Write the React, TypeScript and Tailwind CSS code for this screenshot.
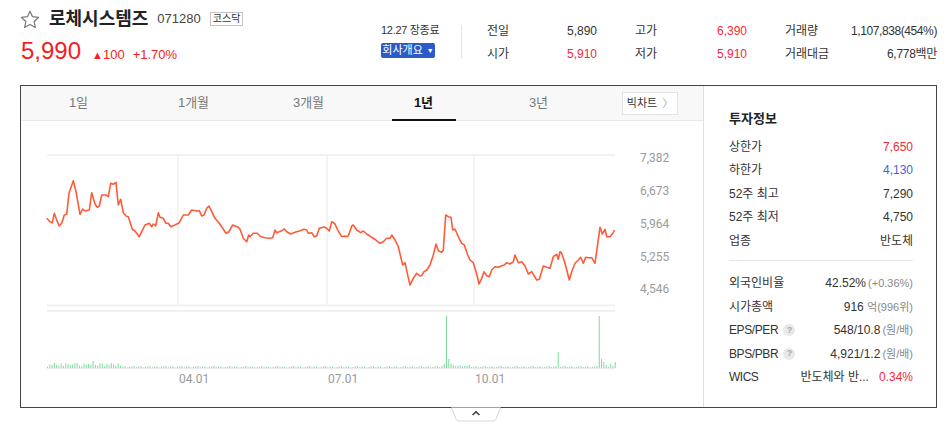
import React from "react";

const Z6: [number, number][] = [
  [80,265],[90,275],[97,278],[103,250],[110,270],[118,288],[125,280],[133,255],[140,253],[147,190],[160,152],[168,185],[180,253],[188,237],[195,243],[208,240],[215,188],[225,222],[232,232],[238,228],[245,195],[258,195],[265,200],[272,160],[280,163],[288,157],[295,225],[302,208],[310,248],[318,258],[325,260],[337,298],[345,303],[358,320],[365,305],[375,285],[388,280],[395,290],[400,282],[407,288],[415,248],[420,262],[430,265],[438,280],[445,280],[452,290],[465,285],[478,278],[490,255],[505,255],[515,240],[530,243],[538,242],[545,258],[552,255],[560,235],[567,228],[575,245],[585,265],[598,280],[605,290],[618,310],[627,305],[638,285],[655,292],[660,298],[670,325],[680,335],[686,315],[690,320],[700,310],[712,310],[722,320],[735,323],[750,325],[758,323],[765,300],[770,308],[785,302],[793,297],[800,305],[812,312],[825,307],[840,302],[852,298],[860,300],[865,310],[875,308],[883,320],[890,318],[898,295],[912,291],[920,295],[928,303],[935,275],[945,282],[952,298],[965,320],[975,318]
];
const Z7: [number, number][] = [
  [15,320],[25,318],[35,288],[40,285],[50,300],[62,308],[70,303],[80,312],[95,322],[105,328],[120,340],[130,335],[140,325],[150,325],[155,315],[165,330],[175,350],[188,405],[195,398],[202,430],[210,465],[220,445],[230,430],[240,438],[245,437],[252,425],[260,420],[270,405],[280,375],[288,342],[295,362],[305,367],[310,360],[317,255],[325,260],[333,262],[338,300],[345,297],[355,320],[365,340],[373,345],[383,375],[390,390],[400,398],[410,432],[417,462],[425,445],[432,425],[440,437],[448,440],[455,420],[465,410],[475,412],[485,407],[493,405],[500,398],[510,402],[520,395],[525,375],[535,398],[545,395],[555,408],[565,432],[575,425],[590,450],[598,448],[610,408],[620,412],[630,415],[640,380],[650,373],[655,388],[660,365],[665,370],[675,400],[688,450],[695,425],[705,400],[715,390],[722,382],[730,400],[737,382],[745,383],[755,383],[765,400],[780,292],[787,312],[795,298],[800,320],[810,320],[820,308],[823,300]
];

const OX = 21;
const OY = 121;

function buildLine() {
  const pts: [number, number][] = [];
  Z6.forEach(([zx, zy]) => pts.push([zx / 3 + 20, zy / 3 + 130]));
  Z7.forEach(([zx, zy]) => pts.push([zx / 3 + 340, zy / 3 + 130]));
  return (
    "M" +
    pts.map((p) => `${(p[0] - OX).toFixed(1)},${(p[1] - OY).toFixed(1)}`).join(" L")
  );
}

function buildBars() {
  const bars: { x: number; h: number }[] = [];
  const n = 250;
  for (let i = 0; i < n; i++) {
    const x = 47 + i * 2.28;
    let h = ((i * 37) % 7) / 4 + 0.6;
    if (x < 120) h += ((i * 13) % 5) * 0.6 + 0.8;
    if (x > 440 && x < 470) h += 1;
    bars.push({ x, h });
  }
  const spikes: [number, number][] = [
    [68, 4], [74, 5], [92, 7], [111, 5], [114, 4], [444, 4], [446, 52], [448, 9], [450, 4], [558, 16], [598, 52], [600, 19], [602, 9], [604, 6], [606, 3], [611, 4], [614, 6],
  ];
  spikes.forEach(([sx, sh]) => {
    let best = 0;
    let bd = 1e9;
    bars.forEach((b, i) => {
      const d = Math.abs(b.x - sx);
      if (d < bd) {
        bd = d;
        best = i;
      }
    });
    bars[best].h = sh;
  });
  return bars;
}

const linePath = buildLine();
const bars = buildBars();

function Chart() {
  const yLabels: [string, number][] = [
    ["7,382", 157],
    ["6,673", 190],
    ["5,964", 223],
    ["5,255", 256],
    ["4,546", 288],
  ];
  const vlines = [178, 327, 474];
  const xLabels: [string, number][] = [
    ["04.01", 179],
    ["07.01", 328],
    ["10.01", 475],
  ];
  return (
    <svg width="682" height="286" viewBox="0 0 682 286" className="block">
      <line x1={47 - OX} x2={615 - OX} y1={155 - OY} y2={155 - OY} stroke="#f1f1f1" strokeWidth="2" />
      <line x1={47 - OX} x2={615 - OX} y1={305.5 - OY} y2={305.5 - OY} stroke="#f1f1f1" strokeWidth="2" />
      <line x1={47 - OX} x2={615 - OX} y1={311 - OY} y2={311 - OY} stroke="#f1f1f1" strokeWidth="2" />
      {vlines.map((v) => (
        <line key={v} x1={v - OX} x2={v - OX} y1={155 - OY} y2={305 - OY} stroke="#f1f1f1" strokeWidth="1.5" />
      ))}
      <path d={linePath} fill="none" stroke="#ff5b39" strokeWidth="1.6" strokeLinejoin="round" />
      {yLabels.map(([t, y]) => (
        <text key={t} x={640 - OX} y={y - OY + 4.5} fontSize="12" fill="#9a9a9a" fontFamily="Roboto, 'Liberation Sans', sans-serif">
          {t}
        </text>
      ))}
      <line x1={47 - OX} x2={615 - OX} y1={368.5 - OY} y2={368.5 - OY} stroke="#ececec" strokeWidth="1.5" />
      {bars.map((b, i) => (
        <rect key={i} x={b.x - OX} y={368 - b.h - OY} width="1" height={b.h} fill="#7fdc9c" />
      ))}
      {xLabels.map(([t, x]) => (
        <text key={t} x={x - OX} y={383 - OY} fontSize="12" fill="#9a9a9a" fontFamily="Roboto, 'Liberation Sans', sans-serif">
          {t}
        </text>
      ))}
    </svg>
  );
}

function Star() {
  return (
    <svg width="20" height="19" viewBox="0 0 24 23">
      <path
        d="M12 1.5l3.1 6.6 7.2.9-5.3 5 1.4 7.1L12 17.6l-6.4 3.5 1.4-7.1-5.3-5 7.2-.9z"
        fill="none"
        stroke="#7b7b7b"
        strokeWidth="1.5"
        strokeLinejoin="round"
      />
    </svg>
  );
}

function Help() {
  return (
    <span className="ml-[5px] inline-flex h-[12px] w-[12px] items-center justify-center rounded-full bg-[#e9e9e9] text-[9px] font-bold leading-none text-[#a8a8a8]">
      ?
    </span>
  );
}

export default function App() {
  const tabs = ["1일", "1개월", "3개월", "1년", "3년"];
  return (
    <div className="h-[439px] w-[949px] overflow-hidden bg-white font-['Liberation_Sans','Noto_Sans_CJK_KR',sans-serif] text-[#333]">
      {/* Header */}
      <div className="flex h-[85px]">
        <div className="flex w-[381px] flex-col pl-[20px] pt-[9px]">
          <div className="flex h-[20px] items-center">
            <Star />
            <span className="ml-[9px] text-[18px] font-bold leading-[20px] text-[#222]">로체시스템즈</span>
            <span className="ml-[9px] text-[13px] leading-[20px] text-[#444]">071280</span>
            <span className="ml-[9px] flex h-[14px] items-center border border-[#c3c3c3] px-[2px] text-[10px] leading-none text-[#333]">
              코스닥
            </span>
          </div>
          <div className="mt-[8px] flex items-baseline pl-px">
            <span className="text-[24px] leading-[28px] text-[#f51d22]">5,990</span>
            <span className="ml-[11px] text-[13px] text-[#f51d22]">
              <span className="text-[11px]">▲</span>100
            </span>
            <span className="ml-[8px] text-[13px] text-[#f51d22]">+1.70%</span>
          </div>
        </div>
        <div className="flex w-[80px] flex-col pt-[23px]">
          <div className="h-[14px] text-[11px] leading-[14px] tracking-[-0.3px] text-[#333]">12.27 장종료</div>
          <div className="mt-[6px] flex h-[15px] w-[54px] items-center justify-center rounded-[2px] bg-[#2a5bc7] text-[11px] leading-none text-white">
            회사개요
            <span className="ml-[4px] text-[7px]">▼</span>
          </div>
        </div>
        <div className="mt-[25px] h-[33px] w-px bg-[#e3e3e3]" />
        <div className="ml-[25px] flex pt-[19px] text-[12px]">
          <div className="flex w-[110px] flex-col">
            <div className="flex h-[23px] items-center justify-between">
              <span>전일</span>
              <span>5,890</span>
            </div>
            <div className="flex h-[23px] items-center justify-between">
              <span>시가</span>
              <span className="text-[#f5283a]">5,910</span>
            </div>
          </div>
          <div className="ml-[38px] flex w-[112px] flex-col">
            <div className="flex h-[23px] items-center justify-between">
              <span>고가</span>
              <span className="text-[#f5283a]">6,390</span>
            </div>
            <div className="flex h-[23px] items-center justify-between">
              <span>저가</span>
              <span className="text-[#f5283a]">5,910</span>
            </div>
          </div>
          <div className="ml-[38px] flex w-[152px] flex-col">
            <div className="flex h-[23px] items-center justify-between">
              <span>거래량</span>
              <span className="tracking-[-0.4px]">1,107,838(454%)</span>
            </div>
            <div className="flex h-[23px] items-center justify-between">
              <span>거래대금</span>
              <span className="tracking-[-0.3px]">6,778백만</span>
            </div>
          </div>
        </div>
      </div>

      {/* Box */}
      <div className="ml-[20px] flex h-[323px] w-[917px] border border-[#444]">
        <div className="flex w-[682px] flex-col">
          <div className="flex h-[35px] items-stretch border-b border-[#e8e8e8] bg-[#f8f8f8]">
            {tabs.map((t) => (
              <div key={t} className="flex w-[115px] justify-center">
                {t === "1년" ? (
                  <span className="mb-[-1px] flex w-[64px] items-center justify-center border-b-2 border-[#111] text-[13px] font-bold text-[#111]">
                    {t}
                  </span>
                ) : (
                  <span className="flex items-center text-[13px] text-[#777]">{t}</span>
                )}
              </div>
            ))}
            <div className="ml-[26px] flex items-center">
              <div className="flex h-[23px] w-[56px] items-center justify-center border border-[#e2e2e2] bg-white text-[11px] text-[#333]">
                빅차트
                <span className="ml-[5px] text-[11px] text-[#aaa]">〉</span>
              </div>
            </div>
          </div>
          <Chart />
        </div>
        <div className="flex flex-1 flex-col border-l border-[#e0e0e0] pl-[25px] pr-[23px] pt-[23px] text-[12px]">
          <div className="h-[20px] text-[13px] font-bold leading-[20px] text-[#222]">투자정보</div>
          <div className="mt-[6px] flex flex-col">
            <div className="flex h-[23.5px] items-center justify-between">
              <span>상한가</span>
              <span className="text-[#f5283a]">7,650</span>
            </div>
            <div className="flex h-[23.5px] items-center justify-between">
              <span>하한가</span>
              <span className="text-[#4a5fd6]">4,130</span>
            </div>
            <div className="flex h-[23.5px] items-center justify-between">
              <span>52주 최고</span>
              <span>7,290</span>
            </div>
            <div className="flex h-[23.5px] items-center justify-between">
              <span>52주 최저</span>
              <span>4,750</span>
            </div>
            <div className="flex h-[23.5px] items-center justify-between">
              <span>업종</span>
              <span>반도체</span>
            </div>
          </div>
          <div className="mt-[7px] h-px bg-[#e6e6e6]" />
          <div className="mt-[11px] flex flex-col">
            <div className="flex h-[23.5px] items-center justify-between">
              <span>외국인비율</span>
              <span>
                42.52%<span className="ml-[2px] text-[11px] text-[#888]">(+0.36%)</span>
              </span>
            </div>
            <div className="flex h-[23.5px] items-center justify-between">
              <span>시가총액</span>
              <span>
                916 <span className="text-[11px] text-[#888]">억(996위)</span>
              </span>
            </div>
            <div className="flex h-[23.5px] items-center justify-between">
              <span className="flex items-center tracking-[-0.4px]">
                EPS/PER
                <Help />
              </span>
              <span>
                548/10.8<span className="ml-[2px] text-[11px] text-[#888]">(원/배)</span>
              </span>
            </div>
            <div className="flex h-[23.5px] items-center justify-between">
              <span className="flex items-center tracking-[-0.4px]">
                BPS/PBR
                <Help />
              </span>
              <span>
                4,921/1.2<span className="ml-[2px] text-[11px] text-[#888]">(원/배)</span>
              </span>
            </div>
            <div className="flex h-[23.5px] items-center justify-between">
              <span className="tracking-[-0.5px]">WICS</span>
              <span>
                반도체와 반...<span className="ml-[10px] text-[#f5283a]">0.34%</span>
              </span>
            </div>
          </div>
        </div>
      </div>

      {/* Collapse tab */}
      <div className="ml-[451px] mt-[-1px]">
        <svg width="50" height="15" viewBox="0 0 50 15" className="block">
          <path d="M0.5,0.5 L5,12 Q6,14 8,14 L42,14 Q44,14 45,12 L49.5,0.5" fill="#fff" stroke="#d6d6d6" strokeWidth="1" />
          <path d="M21.5,8 L25,4.8 L28.5,8" fill="none" stroke="#444" strokeWidth="1.6" />
        </svg>
      </div>
    </div>
  );
}
